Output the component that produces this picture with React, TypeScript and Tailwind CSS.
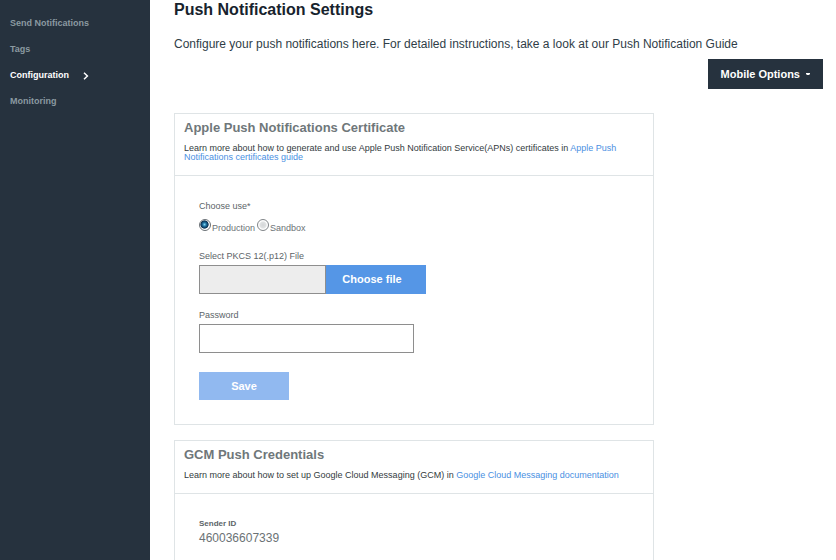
import type { ReactNode } from 'react';
import { useState } from 'react';

const navItems = [
  { label: 'Send Notifications', active: false },
  { label: 'Tags', active: false },
  { label: 'Configuration', active: true },
  { label: 'Monitoring', active: false },
];

function Sidebar() {
  return (
    <nav className="w-[150px] shrink-0 bg-[#26323e] pt-[11px] pl-[10px]">
      <ul>
        {navItems.map((item) => (
          <li key={item.label} className="h-[26px]">
            <a
              href="#"
              aria-current={item.active ? 'page' : undefined}
              className={
                item.active
                  ? 'flex h-full items-center gap-[14px] text-[9px] font-bold text-white'
                  : 'flex h-full items-center text-[9px] font-bold text-[#8b9aa1]'
              }
            >
              {item.label}
              {item.active && (
                <svg width="6" height="8" viewBox="0 0 6 8" fill="none" stroke="currentColor" strokeWidth="1.5" aria-hidden="true">
                  <path d="M1 0.8 L4.4 4 L1 7.2" />
                </svg>
              )}
            </a>
          </li>
        ))}
      </ul>
    </nav>
  );
}

function Card({ title, intro, children }: { title: string; intro: ReactNode; children: ReactNode }) {
  return (
    <section className="max-w-[480px] border border-[#dfe4e6]">
      <header className="border-b border-[#dfe4e6] px-[9px] pt-[6px] pb-[13px]">
        <h2 className="text-[13px] leading-[16px] font-bold text-[#6f777a]">{title}</h2>
        <p className="mt-2 text-[9px] leading-[9px] text-[#333b40]">{intro}</p>
      </header>
      <div className="px-6 py-6">{children}</div>
    </section>
  );
}

function RadioOption({ label, checked, onSelect }: { label: string; checked: boolean; onSelect: () => void }) {
  return (
    <label className="flex items-start text-[9px] leading-[12px] text-[#6b7275]">
      <input
        type="radio"
        name="use"
        checked={checked}
        onChange={onSelect}
        className="mr-px size-3 appearance-none rounded-full border border-[#808488] bg-[radial-gradient(circle,#d4d6d8_0,#dfe1e2_40%,#ffffff_60%)] checked:border-[#6a7075] checked:bg-[radial-gradient(circle_at_45%_45%,#7fd6f5_0,#1b6c9c_25%,#0c3050_48%,#ffffff_58%)]"
      />
      <span className="pt-[3px]">{label}</span>
    </label>
  );
}

export default function App() {
  const [use, setUse] = useState('Production');
  const labelClass = 'block text-[9px] leading-[12px] text-[#5c6468]';

  return (
    <div className="flex h-screen overflow-hidden bg-white font-['Liberation_Sans',Arial,sans-serif]">
      <Sidebar />
      <main className="min-w-0 flex-1 pr-[13px] pl-6">
        <h1 className="text-[16px] leading-[20px] font-bold text-[#17232d]">Push Notification Settings</h1>
        <p className="mt-4 text-[12px] leading-[16px] text-[#2f3d47]">
          Configure your push notifications here. For detailed instructions, take a look at our Push Notification Guide
        </p>
        <div className="mt-[7px] mb-6 flex justify-end">
          <button type="button" className="flex h-[30px] items-center gap-[6px] bg-[#26323e] px-[13px] text-[11px] font-bold text-white">
            Mobile Options
            <svg width="4" height="2" viewBox="0 0 4 2" fill="currentColor" aria-hidden="true">
              <path d="M0 0h4v1l-1 1h-2l-1-1z" />
            </svg>
          </button>
        </div>

        <div className="flex flex-col gap-[15px]">
          <Card
            title="Apple Push Notifications Certificate"
            intro={
              <>
                Learn more about how to generate and use Apple Push Notification Service(APNs) certificates in{' '}
                <a href="#" className="text-[#4a90e2]">
                  Apple Push
                  <br />
                  Notifications certificates guide
                </a>
              </>
            }
          >
            <form onSubmit={(e) => e.preventDefault()}>
              <fieldset>
                <legend className={labelClass}>Choose use*</legend>
                <div className="mt-[7px] flex gap-[2px]">
                  <RadioOption label="Production" checked={use === 'Production'} onSelect={() => setUse('Production')} />
                  <RadioOption label="Sandbox" checked={use === 'Sandbox'} onSelect={() => setUse('Sandbox')} />
                </div>
              </fieldset>

              <label htmlFor="p12" className={`${labelClass} mt-4`}>
                Select PKCS 12(.p12) File
              </label>
              <div className="mt-[3px] flex h-[29px]">
                <input id="p12" type="text" readOnly className="w-[127px] border border-[#8e8e8e] bg-[#ededed] px-2 text-[12px]" />
                <button type="button" className="w-[100px] bg-[#5596e6] pr-2 text-[11px] font-bold text-white">
                  Choose file
                </button>
              </div>

              <label htmlFor="password" className={`${labelClass} mt-[15px]`}>
                Password
              </label>
              <input id="password" type="password" className="mt-[3px] block h-[29px] w-[215px] border border-[#8e8e8e] px-2 text-[12px]" />

              <button type="submit" className="mt-[19px] block h-7 w-[90px] bg-[#91b9f0] text-[11px] font-bold text-white">
                Save
              </button>
            </form>
          </Card>

          <Card
            title="GCM Push Credentials"
            intro={
              <>
                Learn more about how to set up Google Cloud Messaging (GCM) in{' '}
                <a href="#" className="text-[#4a90e2]">
                  Google Cloud Messaging documentation
                </a>
              </>
            }
          >
            <dl>
              <dt className="text-[8px] leading-[12px] font-bold text-[#5c6468]">Sender ID</dt>
              <dd className="text-[12px] leading-[16px] text-[#6b7275]">460036607339</dd>
            </dl>
          </Card>
        </div>
      </main>
    </div>
  );
}
